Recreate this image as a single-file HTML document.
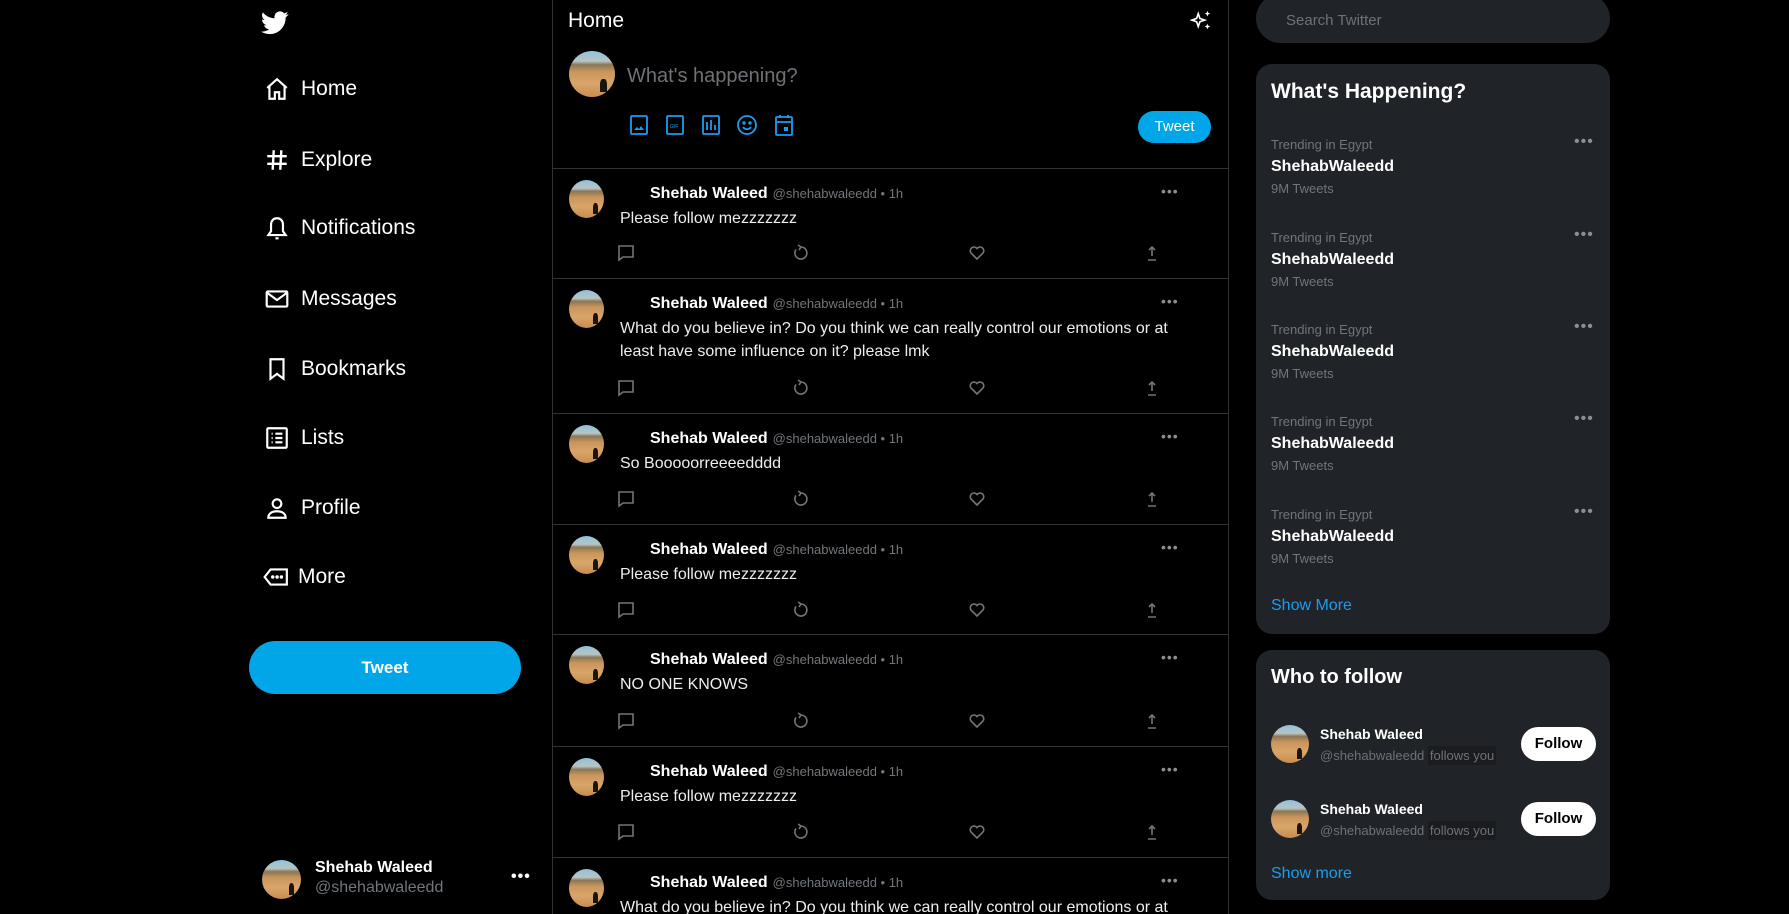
<!DOCTYPE html>
<html style="height:914px;overflow:hidden"><head><meta charset="utf-8"><style>
*{margin:0;padding:0;box-sizing:border-box}
html,body{width:1789px;height:914px;overflow:hidden}
body{background:#000;color:#fff;font-family:"Liberation Sans",sans-serif;position:relative}
.a{position:absolute}
.nav{position:absolute;left:264px;display:flex;align-items:center;font-size:21px;color:#fff}
.nav svg{width:26px;height:26px;margin-right:11px}
.av{position:absolute;border-radius:50%;background:linear-gradient(180deg,#8fc3de 0%,#b8c4c2 22%,#8a7656 30%,#c9955a 45%,#d9a56a 70%,#c98d4e 100%);overflow:hidden}
.av:after{content:"";position:absolute;right:18%;bottom:10%;width:14%;height:30%;background:#1a1410;border-radius:40% 40% 0 0}
.tw{position:absolute;left:552px;width:676px;border-bottom:1px solid #2f3336}
.nm{position:absolute;left:98px;top:16px;font-weight:bold;font-size:16px}
.hd{font-weight:normal;font-size:13px;color:#71767b;margin-left:5px}
.tx{position:absolute;left:68px;top:38px;font-size:16px;line-height:23px;width:580px;color:#eee}
.dt{position:absolute;left:609px;top:14px;color:#8b8f93;font-size:14px;letter-spacing:1px}
.card{position:absolute;left:1256px;width:354px;background:#202327;border-radius:16px}
.tr{position:absolute;left:15px}
.tr .s{font-size:13px;color:#71767b}
.tr .b{font-size:16px;font-weight:bold;margin-top:6px}
.tr .c{font-size:13px;color:#71767b;margin-top:5px}
.tr .d{position:absolute;left:303px;top:-4px;color:#8b8f93;letter-spacing:1px}
.fb{position:absolute;left:265px;width:75px;height:34px;border-radius:17px;background:#fff;color:#000;font-weight:bold;font-size:15px;text-align:center;line-height:34px}
</style></head><body>

<svg class="a" style="left:261px;top:11px" width="28" height="24" viewBox="0 0 24 20"><path fill="#fff" d="M23.6 2.4c-.9.4-1.8.6-2.8.8 1-.6 1.800-1.600 2.1-2.7-.9.6-2 1-3.1 1.2C19 .7 17.7 0 16.3 0c-2.7 0-4.8 2.2-4.8 4.9 0 .4 0 .8.1 1.1C7.5 5.8 4 3.9 1.6.9c-.4.7-.7 1.6-.7 2.5 0 1.7.9 3.2 2.2 4.1-.8 0-1.5-.2-2.2-.6v.1c0 2.4 1.7 4.4 3.9 4.8-.4.1-.8.2-1.3.2-.3 0-.6 0-.9-.1.6 2 2.4 3.4 4.5 3.4-1.7 1.300-3.800 2.100-6 2.100-.4 0-.8 0-1.1-.1 2.1 1.4 4.7 2.2 7.4 2.2 8.9 0 13.7-7.4 13.7-13.7v-.6c.9-.7 1.7-1.5 2.3-2.4z"/></svg>

<div class="nav" style="top:76px"><svg viewBox="0 0 24 24" fill="none" stroke="#fff" stroke-width="2"><path d="M3 11L12 3l9 8M5 9.5V21h5v-6h4v6h5V9.5"/></svg>Home</div>
<div class="nav" style="top:147px"><svg viewBox="0 0 24 24" fill="none" stroke="#fff" stroke-width="2.2"><path d="M9 3L8 21M16 3l-1 18M3 8.5h18M3 15.5h18"/></svg>Explore</div>
<div class="nav" style="top:215px"><svg viewBox="0 0 24 24" fill="none" stroke="#fff" stroke-width="2"><path d="M12 3c-3.5 0-5.5 2.5-5.5 6v6L4 18.5h16L17.5 15V9c0-3.5-2-6-5.5-6zM12 2v1M10.5 21.5h3"/></svg>Notifications</div>
<div class="nav" style="top:286px"><svg viewBox="0 0 24 24" fill="none" stroke="#fff" stroke-width="2"><rect x="2.5" y="5" width="19" height="14" rx="1"/><path d="M2.5 6l9.5 7 9.5-7"/></svg>Messages</div>
<div class="nav" style="top:356px"><svg viewBox="0 0 24 24" fill="none" stroke="#fff" stroke-width="2"><path d="M6 3h12v18l-6-4.5L6 21z"/></svg>Bookmarks</div>
<div class="nav" style="top:425px"><svg viewBox="0 0 24 24" fill="none" stroke="#fff" stroke-width="2"><rect x="3" y="3" width="18" height="18" rx="1"/><path d="M7 8h1M7 12h1M7 16h1M10.5 8H17M10.5 12H17M10.5 16H17"/></svg>Lists</div>
<div class="nav" style="top:495px"><svg viewBox="0 0 24 24" fill="none" stroke="#fff" stroke-width="2"><circle cx="12" cy="8" r="4"/><path d="M4 21c0-4 3.5-6 8-6s8 2 8 6z"/></svg>Profile</div>
<div class="nav" style="top:564px"><svg viewBox="0 0 24 24" fill="none" stroke="#fff" stroke-width="2" style="width:30px;margin-left:-3px;margin-right:7px"><path d="M7 5h15v14H7L1.5 12z"/><circle cx="9" cy="12" r=".6" fill="#fff"/><circle cx="13" cy="12" r=".6" fill="#fff"/><circle cx="17" cy="12" r=".6" fill="#fff"/></svg>More</div>

<div class="a" style="left:249px;top:641px;width:272px;height:53px;border-radius:27px;background:#00a6e8;text-align:center;line-height:53px;font-weight:bold;font-size:17px">Tweet</div>

<div class="av" style="left:262px;top:860px;width:39px;height:39px"></div>
<div class="a" style="left:315px;top:859px;font-weight:bold;font-size:16px">Shehab Waleed</div>
<div class="a" style="left:315px;top:879px;font-size:16px;color:#71767b">@shehabwaleedd</div>
<div class="a" style="left:511px;top:868px;font-size:16px;font-weight:bold;letter-spacing:1px">•••</div>

<div class="a" style="left:552px;top:0;width:1px;height:914px;background:#2f3336"></div>
<div class="a" style="left:1228px;top:0;width:1px;height:914px;background:#2f3336"></div>
<div class="a" style="left:568px;top:9px;font-size:21px">Home</div>
<svg class="a" style="left:1190px;top:10px" width="22" height="22" viewBox="0 0 24 24" fill="#fff"><path d="M9 4l1.8 5.2L16 11l-5.2 1.8L9 18l-1.8-5.2L2 11l5.2-1.8z" fill="none" stroke="#fff" stroke-width="1.8"/><path d="M19 1l.9 2.1L22 4l-2.1.9L19 7l-.9-2.1L16 4l2.1-.9zM19 15l.9 2.1 2.1.9-2.1.9L19 21l-.9-2.1L16 18l2.1-.9z"/></svg>
<div class="av" style="left:569px;top:51px;width:46px;height:46px"></div>
<div class="a" style="left:627px;top:65px;font-size:20px;color:#6e7276">What's happening?</div>
<svg class="a" style="left:630px;top:114px" width="170" height="22" viewBox="0 0 170 22" fill="none" stroke="#1d9bf0" stroke-width="1.8">
<rect x="1" y="2" width="16" height="18" rx="1"/><path d="M4 16l3-3 2 2 2-3 3 4z" fill="#1d9bf0" stroke="none"/>
<rect x="37" y="2" width="16" height="18" rx="1"/><text x="40" y="14" font-size="5" fill="#1d9bf0" stroke="none" font-family="Liberation Sans">GIF</text>
<rect x="73" y="2" width="16" height="18" rx="1"/><path d="M77 16V8M81 16V6M85 16v-5"/>
<circle cx="117" cy="11" r="9"/><circle cx="114" cy="9" r=".8" fill="#1d9bf0"/><circle cx="120" cy="9" r=".8" fill="#1d9bf0"/><path d="M113 13c2 3 6 3 8 0"/>
<rect x="146" y="3" width="16" height="18" rx="1"/><path d="M146 8h16M150 1v3M158 1v3"/><rect x="154" y="13" width="4" height="4" fill="#1d9bf0" stroke="none"/>
</svg>
<div class="a" style="left:1138px;top:111px;width:73px;height:32px;border-radius:16px;background:#00a6e8;text-align:center;line-height:32px;font-size:15px">Tweet</div>
<div class="a" style="left:552px;top:168px;width:676px;height:1px;background:#2f3336"></div>

<div class="tw" style="top:169px;height:110px"><div class="av" style="left:17px;top:11px;width:35px;height:38px"></div><div class="nm">Shehab Waleed<span class="hd">@shehabwaleedd • 1h</span></div><div class="tx">Please follow mezzzzzzz</div><div class="dt">•••</div></div>
<div class="tw" style="top:279px;height:135px"><div class="av" style="left:17px;top:11px;width:35px;height:38px"></div><div class="nm">Shehab Waleed<span class="hd">@shehabwaleedd • 1h</span></div><div class="tx">What do you believe in? Do you think we can really control our emotions or at least have some influence on it? please lmk</div><div class="dt">•••</div></div>
<div class="tw" style="top:414px;height:111px"><div class="av" style="left:17px;top:11px;width:35px;height:38px"></div><div class="nm">Shehab Waleed<span class="hd">@shehabwaleedd • 1h</span></div><div class="tx">So Booooorreeeedddd</div><div class="dt">•••</div></div>
<div class="tw" style="top:525px;height:110px"><div class="av" style="left:17px;top:11px;width:35px;height:38px"></div><div class="nm">Shehab Waleed<span class="hd">@shehabwaleedd • 1h</span></div><div class="tx">Please follow mezzzzzzz</div><div class="dt">•••</div></div>
<div class="tw" style="top:635px;height:112px"><div class="av" style="left:17px;top:11px;width:35px;height:38px"></div><div class="nm">Shehab Waleed<span class="hd">@shehabwaleedd • 1h</span></div><div class="tx">NO ONE KNOWS</div><div class="dt">•••</div></div>
<div class="tw" style="top:747px;height:111px"><div class="av" style="left:17px;top:11px;width:35px;height:38px"></div><div class="nm">Shehab Waleed<span class="hd">@shehabwaleedd • 1h</span></div><div class="tx">Please follow mezzzzzzz</div><div class="dt">•••</div></div>
<div class="tw" style="top:858px;height:56px;border:none;overflow:hidden"><div class="av" style="left:17px;top:11px;width:35px;height:38px"></div><div class="nm">Shehab Waleed<span class="hd">@shehabwaleedd • 1h</span></div><div class="tx">What do you believe in? Do you think we can really control our emotions or at least have some influence on it? please lmk</div><div class="dt">•••</div></div>

<svg width="0" height="0" style="position:absolute"><defs>
<g id="acts" fill="none" stroke="#71767b" stroke-width="1.6">
<path d="M2 3h14v11H6l-4 3z"/>
<path d="M184 4a6 6 0 1 1-5 2.5M181 2l3 2-2 3"/>
<path d="M360 16l-6-6a3.5 3.5 0 0 1 6-4.500 3.5 3.5 0 0 1 6 4.500z"/>
<path d="M535 13V4M532 7l3-3 3 3M531 17h8"/>
</g></defs></svg>
<svg class="a" style="left:617px;top:243px" width="560" height="22"><use href="#acts"/></svg>
<svg class="a" style="left:617px;top:378px" width="560" height="22"><use href="#acts"/></svg>
<svg class="a" style="left:617px;top:489px" width="560" height="22"><use href="#acts"/></svg>
<svg class="a" style="left:617px;top:600px" width="560" height="22"><use href="#acts"/></svg>
<svg class="a" style="left:617px;top:711px" width="560" height="22"><use href="#acts"/></svg>
<svg class="a" style="left:617px;top:822px" width="560" height="22"><use href="#acts"/></svg>

<div class="a" style="left:1256px;top:-6px;width:354px;height:49px;border-radius:25px;background:#202327"></div>
<div class="a" style="left:1286px;top:12px;font-size:15px;color:#6e7276">Search Twitter</div>

<div class="card" style="top:64px;height:570px">
<div class="a" style="left:15px;top:16px;font-size:21px;font-weight:bold">What's Happening?</div>
<div class="tr" style="top:73px"><div class="s">Trending in Egypt</div><div class="b">ShehabWaleedd</div><div class="c">9M Tweets</div><div class="d">•••</div></div>
<div class="tr" style="top:166px"><div class="s">Trending in Egypt</div><div class="b">ShehabWaleedd</div><div class="c">9M Tweets</div><div class="d">•••</div></div>
<div class="tr" style="top:258px"><div class="s">Trending in Egypt</div><div class="b">ShehabWaleedd</div><div class="c">9M Tweets</div><div class="d">•••</div></div>
<div class="tr" style="top:350px"><div class="s">Trending in Egypt</div><div class="b">ShehabWaleedd</div><div class="c">9M Tweets</div><div class="d">•••</div></div>
<div class="tr" style="top:443px"><div class="s">Trending in Egypt</div><div class="b">ShehabWaleedd</div><div class="c">9M Tweets</div><div class="d">•••</div></div>
<div class="a" style="left:15px;top:533px;font-size:16px;color:#1d9bf0">Show More</div>
</div>

<div class="card" style="top:650px;height:250px">
<div class="a" style="left:15px;top:16px;font-size:20px;font-weight:bold">Who to follow</div>
<div class="av" style="left:15px;top:75px;width:38px;height:38px"></div>
<div class="a" style="left:64px;top:76px;font-size:14px;font-weight:bold">Shehab Waleed</div>
<div class="a" style="left:64px;top:98px;font-size:13px;color:#6e7276">@shehabwaleedd <span style="background:#1a1c1f;padding:2px">follows you</span></div>
<div class="fb" style="top:77px">Follow</div>
<div class="av" style="left:15px;top:150px;width:38px;height:38px"></div>
<div class="a" style="left:64px;top:151px;font-size:14px;font-weight:bold">Shehab Waleed</div>
<div class="a" style="left:64px;top:173px;font-size:13px;color:#6e7276">@shehabwaleedd <span style="background:#1a1c1f;padding:2px">follows you</span></div>
<div class="fb" style="top:152px">Follow</div>
<div class="a" style="left:15px;top:215px;font-size:16px;color:#1d9bf0">Show more</div>
</div>
</body></html>
